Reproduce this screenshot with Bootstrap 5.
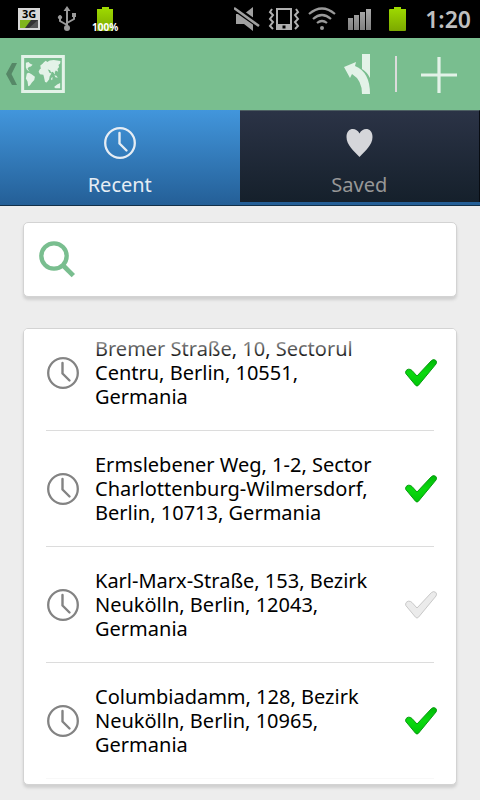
<!DOCTYPE html>
<html lang="en">
<head>
<meta charset="utf-8">
<meta name="viewport" content="width=device-width, initial-scale=1">
<title>Recent places</title>
<link href="https://cdn.jsdelivr.net/npm/bootstrap@5.3.0/dist/css/bootstrap.min.css" rel="stylesheet">
<style>
body { background: #ededed; font-family: "Noto Sans", "Open Sans", sans-serif; color: #000; }
svg { display: block; flex: none; }
.status { height: 38px; background: #000; padding: 0 9px 0 18px; }
.status .clock { font-size: 23px; line-height: 38px; font-weight: 600; color: #bfbfbf; margin-left: 17px; }
.status .usb { margin: 0 11px 0 14px; }
.appbar { height: 72px; background: #79be8f; padding: 0 23px 0 6px; }
.appbar .divider { width: 2px; height: 36px; background: #dcdcdc; }
.tabs { height: 96px; background: #245f97; border-bottom: 1px solid #123049; }
.tabs .tab { flex: 1 1 0; border: 0; border-radius: 0; padding: 17px 0 0; font-size: 20px; line-height: 24px; gap: 14px; }
.tabs .tab-on { background: linear-gradient(#4296dc, #245f97); color: #e6edf4; }
.tabs .tab-off { background: linear-gradient(#2b3346, #15202b); color: #979797; border-top: 1px solid #4d5f62; border-right: 1px solid #080c12; padding-top: 16px; margin-bottom: 3px; }
.content { padding: 16px 23px; }
.panel { background: #fff; border: 1px solid #d3d3d3; border-radius: 5px; box-shadow: 0 3px 3px #d0d0d0; }
.search { height: 75px; padding: 0 15px; gap: 12px; margin-bottom: 31px; }
.search input { font-size: 20px; }
.places { padding: 0 22px 5px; overflow: hidden; }
.place { padding: 22px 0 21px; border-bottom: 1px solid #dcdcdc; }
.place:first-child { padding-top: 8px; }
.place:last-child { border-bottom-color: #f8f8f8; }
.place .icon { color: #838383; margin: 0 16px 0 1px; }
.place .address { font-size: 20px; line-height: 24px; }
.fade-top { top: 0; left: 0; right: 0; height: 30px; background: linear-gradient(#fff, #fff0); pointer-events: none; }
.toggle { border: 0; background: none; padding: 0; margin-right: -3px; }
</style>
</head>
<body>
<svg width="0" height="0" class="position-absolute" aria-hidden="true">
  <defs>
    <linearGradient id="green" x2="0" y2="1"><stop stop-color="#00b808"/><stop offset=".5" stop-color="#0bd90f"/><stop offset="1" stop-color="#00c708"/></linearGradient>
    <linearGradient id="batt" x2="0" y2="1"><stop stop-color="#a0dc00"/><stop offset="1" stop-color="#7ca800"/></linearGradient>
    <linearGradient id="bars" x2="0" y2="1"><stop stop-color="#aaa"/><stop offset="1" stop-color="#808080"/></linearGradient>
    <symbol id="clock" viewBox="0 0 32 32"><circle cx="16" cy="16" r="14.8" fill="none" stroke="currentColor" stroke-width="2.3"/><path d="M15.500 6v10.500l7 7" fill="none" stroke="currentColor" stroke-width="2.4" stroke-linecap="round" stroke-linejoin="round"/></symbol>
    <symbol id="check" viewBox="0 0 32 28"><path d="M.8 14.500Q0 11 3.500 10.200Q5.500 10 7 11.500L12 17L26.500 1.500Q28.500-.2 30.800 1.400Q32.200 3 31 5L13.500 26.200Q12 28 10.500 26.200Z"/></symbol>
  </defs>
</svg>

<div class="status d-flex align-items-center">
  <svg width="22" height="22" viewBox="0 0 22 22" overflow="visible" role="img" aria-label="3G"><path fill="#d8d8d8" d="M0 0h22v22H0z"/><path fill="#333" d="M2 12h18v8H2z"/><path fill="#7fb51c" d="M2 12h11l-6 8H2z"/><path fill="#777" d="M20 12v8h-9z" opacity=".5"/><text x="4" y="10" font-size="11" font-weight="700" fill="#000">3G</text></svg>
  <svg class="usb" width="24" height="26" viewBox="0 0 24 26" fill="none" stroke="#9a9a9a" stroke-width="2" aria-hidden="true"><path d="M13 21V4M13 19l-7-4v-4M13 17l7-4V9"/><circle cx="13" cy="22" r="3" fill="#9a9a9a" stroke="none"/><path d="M9.500 5L13 0l3.500 5zM5 13a2 2 0 1 1 2 0zM18 7h4v4h-4z" fill="#9a9a9a" stroke="none"/></svg>
  <svg width="34" height="32" viewBox="0 0 34 32" role="img" aria-label="Battery 100%"><path fill="url(#batt)" d="M8 6h5V4h7v2h4v22H8z"/><text x="3" y="28" font-size="10" font-weight="700" fill="#fff">100%</text></svg>
  <svg class="ms-auto" width="26" height="24" viewBox="0 0 26 24" aria-hidden="true"><path fill="#a0a0a0" d="M2 7h8l9-7v24l-9-7H2z"/><path d="M-1 0l27 19" stroke="#000" stroke-width="6"/><path d="M0 1l25 18" stroke="#a0a0a0" stroke-width="2.500"/></svg>
  <svg class="ms-2" width="32" height="24" viewBox="0 0 32 24" fill="none" stroke="#b0b0b0" stroke-width="2" aria-hidden="true"><path d="M9 2h14v20H9z"/><path d="M8 17h16v6H8z" fill="#b0b0b0" stroke="none"/><path d="M14.500 18.500h3v3h-3z" fill="#000" stroke="none"/><path d="M4 2L2 5l3 3-3 4 3 3-3 4 3 3M28 2l2 3-3 3 3 4-3 3 3 4-3 3"/></svg>
  <svg class="ms-2" width="28" height="24" viewBox="0 0 28 24" fill="none" stroke="#999" stroke-width="2.200" aria-hidden="true"><path d="M1 7q13-11 26 0M5 12q9-8 18 0M9 16q5-4 10 0"/><circle cx="14" cy="21" r="2" fill="#999" stroke="none"/></svg>
  <svg class="ms-2 me-3" width="28" height="22" viewBox="0 0 28 22" aria-hidden="true"><path fill="url(#bars)" d="M4 10h5v12H4zM10 7h5v15h-5zM16 4h5v18h-5zM22 1h5v21h-5z"/></svg>
  <svg width="20" height="26" viewBox="0 0 20 26" aria-hidden="true"><path fill="url(#batt)" d="M2 3h4V1h7v2h5v21q0 1-1 1H2q-1 0-1-1V4q0-1 1-1z"/></svg>
  <span class="clock">1:20</span>
</div>

<header class="appbar d-flex align-items-center">
  <a href="#" class="d-flex align-items-center gap-1" aria-label="Back to map">
    <svg width="11" height="22" viewBox="0 0 11 22"><path d="M6 0h5L5.500 11 11 22H6L0 11z" fill="#568867"/></svg>
    <svg width="44" height="38" viewBox="64 51 130 113" fill="#e3f2e8"><path fill-rule="evenodd" d="M64 51h130v113H64zM73 60v95h112V60z"/><path d="M78 74l8-2 4 4 8 4-5 5-6 2-4 5 6 9-8-6-3-7zM81 106l6-2 8 4 10 8-2 9-7 8-6 9-5 2-2-14-5-9zM119 94l6-4 10 2 9 3 4 9 6 2-5 8-2 10-7 9-5-2-3-14-2-7-10-2-4-7zM121 82l6-4 4-5 6-5 5 4 7-5 12-1 20 3-1 7-5 5 2 6-5 6 2 8-7-4-3 5 1 7-7-8-5 2-3-7-6-2-5 2-3-3-6 3-7-1zM153 121l4-5v8l-3 2zM162 146l9-7 9-5v16h-14zM163 111l6 2 4 6-7-2z"/></svg>
  </a>
  <button class="btn p-0 border-0 ms-auto" aria-label="Directions"><svg width="28" height="40" viewBox="0 0 28 40" fill="#e3f2e8"><path d="M19 0h8v24q-3-6-8-9zM1 13l12-5-1 4q15 6 15 28h-8q0-14-10-20l-2 4z"/></svg></button>
  <span class="divider ms-4 me-4"></span>
  <button class="btn p-0 border-0" aria-label="Add"><svg width="36" height="38" viewBox="0 0 36 38"><path d="M18 2v36M0 20h36" stroke="#e3f2e8" stroke-width="3.200"/></svg></button>
</header>

<nav class="tabs d-flex" aria-label="Places">
  <button class="btn tab tab-on d-flex flex-column align-items-center"><svg width="32" height="32" aria-hidden="true"><use href="#clock"/></svg>Recent</button>
  <button class="btn tab tab-off d-flex flex-column align-items-center"><svg width="32" height="32" viewBox="0 0 32 32" aria-hidden="true"><path d="M16.500 30C11 24 3.500 18 3.500 10C3.500 0 13.500 0 16.500 6.500C19.500 0 29.500 0 29.500 10C29.500 18 22 24 16.500 30Z" fill="#d5d6da"/></svg>Saved</button>
</nav>

<main class="content">
  <form class="panel search d-flex align-items-center">
    <label for="q" aria-label="Search"><svg width="38" height="38" viewBox="86 92 114 114" fill="none" stroke="#79be8f"><circle cx="131" cy="137" r="38" stroke-width="13"/><path d="M157 164l32 32" stroke-width="14"/></svg></label>
    <input id="q" type="text" class="form-control border-0 shadow-none p-0" autocomplete="off">
  </form>

  <div class="panel places position-relative">
    <ul class="list-unstyled m-0">
      <li class="place d-flex align-items-center">
        <svg class="icon" width="32" height="32" aria-hidden="true"><use href="#clock"/></svg>
        <span class="address">Bremer Straße, 10, Sectorul<br>Centru, Berlin, 10551,<br>Germania</span>
        <button class="toggle ms-auto" aria-label="Saved"><svg width="32" height="28" fill="url(#green)" stroke="#0a9a12"><use href="#check"/></svg></button>
      </li>
      <li class="place d-flex align-items-center">
        <svg class="icon" width="32" height="32" aria-hidden="true"><use href="#clock"/></svg>
        <span class="address">Ermslebener Weg, 1-2, Sector<br>Charlottenburg-Wilmersdorf,<br>Berlin, 10713, Germania</span>
        <button class="toggle ms-auto" aria-label="Saved"><svg width="32" height="28" fill="url(#green)" stroke="#0a9a12"><use href="#check"/></svg></button>
      </li>
      <li class="place d-flex align-items-center">
        <svg class="icon" width="32" height="32" aria-hidden="true"><use href="#clock"/></svg>
        <span class="address">Karl-Marx-Straße, 153, Bezirk<br>Neukölln, Berlin, 12043,<br>Germania</span>
        <button class="toggle ms-auto" aria-label="Not saved"><svg width="32" height="28" fill="#ebebeb" stroke="#c8c8c8"><use href="#check"/></svg></button>
      </li>
      <li class="place d-flex align-items-center">
        <svg class="icon" width="32" height="32" aria-hidden="true"><use href="#clock"/></svg>
        <span class="address">Columbiadamm, 128, Bezirk<br>Neukölln, Berlin, 10965,<br>Germania</span>
        <button class="toggle ms-auto" aria-label="Saved"><svg width="32" height="28" fill="url(#green)" stroke="#0a9a12"><use href="#check"/></svg></button>
      </li>
    </ul>
    <div class="fade-top position-absolute"></div>
  </div>
</main>
<script src="https://cdn.jsdelivr.net/npm/bootstrap@5.3.0/dist/js/bootstrap.bundle.min.js"></script>
</body>
</html>
